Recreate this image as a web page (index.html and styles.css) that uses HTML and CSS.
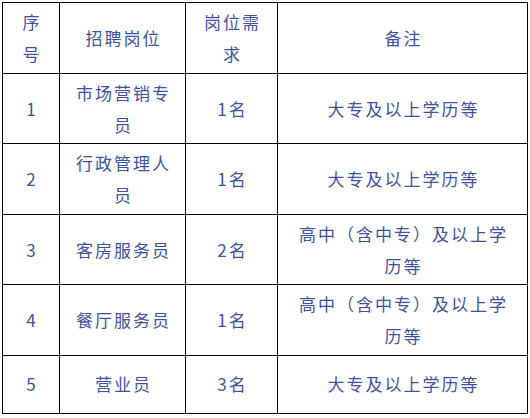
FILE: index.html
```html
<!DOCTYPE html>
<html lang="zh-CN">
<head>
<meta charset="utf-8">
<title>招聘岗位</title>
<link rel="stylesheet" href="styles.css">
</head>
<body>
<table class="jobs">
  <colgroup>
    <col class="c-no">
    <col class="c-pos">
    <col class="c-num">
    <col class="c-note">
  </colgroup>
  <tr class="r-head">
    <td>序号</td>
    <td>招聘岗位</td>
    <td>岗位需求</td>
    <td>备注</td>
  </tr>
  <tr>
    <td>1</td>
    <td>市场营销专员</td>
    <td>1名</td>
    <td>大专及以上学历等</td>
  </tr>
  <tr>
    <td>2</td>
    <td>行政管理人员</td>
    <td>1名</td>
    <td>大专及以上学历等</td>
  </tr>
  <tr>
    <td>3</td>
    <td>客房服务员</td>
    <td>2名</td>
    <td>高中（含中专）及以上学历等</td>
  </tr>
  <tr>
    <td>4</td>
    <td>餐厅服务员</td>
    <td>1名</td>
    <td>高中（含中专）及以上学历等</td>
  </tr>
  <tr class="r-short">
    <td>5</td>
    <td>营业员</td>
    <td>3名</td>
    <td>大专及以上学历等</td>
  </tr>
</table>
</body>
</html>
```

FILE: styles.css
```css
html, body {
  margin: 0;
  padding: 0;
  background: #ffffff;
}

body {
  padding: 2px 0 0 2px;
  font-family: "Noto Sans CJK SC", "Microsoft YaHei", sans-serif;
}

.jobs {
  border-collapse: collapse;
  table-layout: fixed;
  width: 525px;
}

.c-no { width: 57px; }
.c-pos { width: 126px; }
.c-num { width: 92px; }
.c-note { width: 250px; }

.jobs tr.r-short {
  height: 58px;
}

.jobs td {
  border: 1px solid #000000;
  padding: 3px 10px 2.5px 12px;
  text-align: center;
  vertical-align: middle;
  color: #3e53a0;
  font-size: 17px;
  line-height: 32px;
  letter-spacing: 2px;
}
```
